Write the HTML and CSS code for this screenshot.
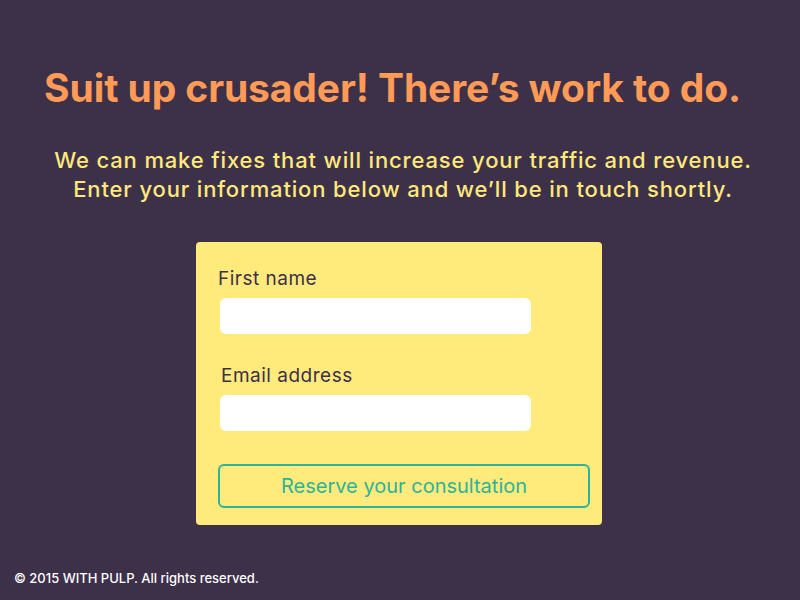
FILE: index.html
```html
<!DOCTYPE html>
<html>
<head>
<meta charset="utf-8">
<link rel="stylesheet" href="styles.css">
</head>
<body>
<main class="page">
  <h1 class="title">Suit up crusader! There’s work to do.</h1>
  <p class="lead">We can make fixes that will increase your traffic and revenue.<br>Enter your information below and we’ll be in touch shortly.</p>
  <form class="card">
    <label class="label">First name</label>
    <input class="field" type="text">
    <label class="label label-email">Email address</label>
    <input class="field" type="text">
    <button class="btn" type="button">Reserve your consultation</button>
  </form>
</main>
<footer class="footer">© 2015 WITH PULP. All rights reserved.</footer>
</body>
</html>
```
FILE: styles.css
```css
html, body {
  margin: 0;
  padding: 0;
  height: 100%;
}
body {
  background: #3d3049;
  font-family: "Inter", "Open Sans", sans-serif;
  display: flex;
  flex-direction: column;
}
.page {
  flex: 1;
  display: flex;
  flex-direction: column;
  align-items: center;
}
.title {
  margin: 64px 0 0 -15px;
  font-size: 39px;
  line-height: 48px;
  font-weight: 700;
  color: #ff9b56;
  letter-spacing: -0.1px;
}
.lead {
  margin: 34px 0 0 6px;
  text-align: center;
  font-size: 22px;
  line-height: 29px;
  color: #ffe97c;
  font-weight: 500;
  letter-spacing: 0.85px;
}
.card {
  margin: 38px 0 0 -2px;
  width: 406px;
  box-sizing: border-box;
  background: #ffea7c;
  border-radius: 4px;
  padding: 25px 12px 17px 22px;
  display: flex;
  flex-direction: column;
  align-items: flex-start;
}
.label {
  font-size: 19px;
  line-height: 24px;
  color: #3d3049;
  letter-spacing: 0.5px;
}
.label-email {
  margin: 30px 0 0 3px;
}
.field {
  margin: 7px 0 0 2px;
  width: 311px;
  height: 36px;
  box-sizing: border-box;
  border: none;
  border-radius: 6px;
  background: #fff;
}
.btn {
  margin-top: 33px;
  width: 372px;
  height: 44px;
  border: 2px solid #2db39a;
  border-radius: 6px;
  background: transparent;
  color: #2db39a;
  font-family: inherit;
  font-size: 20px;
}
.footer {
  padding: 0 0 14px 14px;
  color: #fff;
  font-size: 13px;
  font-weight: 500;
}
```
